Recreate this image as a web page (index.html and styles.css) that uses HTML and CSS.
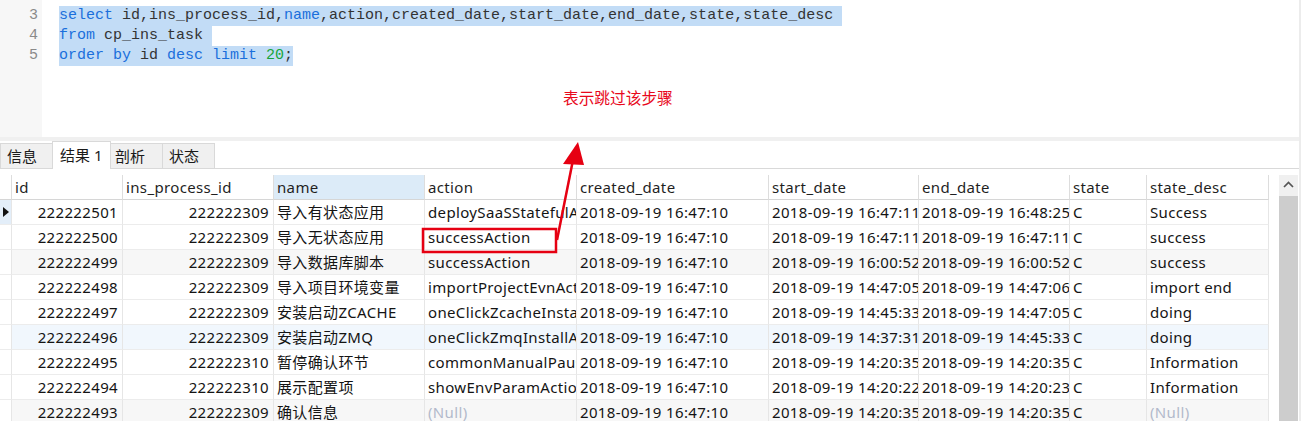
FILE: index.html
```html
<!DOCTYPE html>
<html lang="zh">
<head>
<meta charset="utf-8">
<title>Navicat 查询结果</title>
<link rel="stylesheet" href="styles.css">
</head>
<body>
<div class="page">
  <div class="editor">
    <div class="gutter">
      <div class="ln">3</div>
      <div class="ln">4</div>
      <div class="ln">5</div>
    </div>
    <div class="code">
      <div class="line"><span class="sel"><span class="kw">select</span> id,ins_process_id,<span class="kw">name</span>,action,created_date,start_date,end_date,state,state_desc </span></div>
      <div class="line"><span class="sel"><span class="kw">from</span> cp_ins_task </span></div>
      <div class="line"><span class="sel"><span class="kw">order by</span> id <span class="kw">desc</span> <span class="kw">limit</span> <span class="num">20</span>;</span></div>
    </div>
    <div class="note">表示跳过该步骤</div>
  </div>
  <div class="band"></div>
  <div class="tabs">
    <div class="tab t1">信息</div>
    <div class="tab t2 active">结果 1</div>
    <div class="tab t3">剖析</div>
    <div class="tab t4">状态</div>
  </div>
  <div class="results">
    <div class="grid">
      <div class="row head">
        <div class="cell ind"></div>
        <div class="cell">id</div>
        <div class="cell">ins_process_id</div>
        <div class="cell hsel">name</div>
        <div class="cell">action</div>
        <div class="cell">created_date</div>
        <div class="cell">start_date</div>
        <div class="cell">end_date</div>
        <div class="cell">state</div>
        <div class="cell">state_desc</div>
      </div>
      <div class="row">
        <div class="cell ind cur"><span class="tri"></span></div>
        <div class="cell r">222222501</div>
        <div class="cell r">222222309</div>
        <div class="cell">导入有状态应用</div>
        <div class="cell">deploySaaSStatefulAppAction</div>
        <div class="cell">2018-09-19 16:47:10</div>
        <div class="cell">2018-09-19 16:47:11</div>
        <div class="cell">2018-09-19 16:48:25</div>
        <div class="cell">C</div>
        <div class="cell">Success</div>
      </div>
      <div class="row">
        <div class="cell ind"></div>
        <div class="cell r">222222500</div>
        <div class="cell r">222222309</div>
        <div class="cell">导入无状态应用</div>
        <div class="cell">successAction</div>
        <div class="cell">2018-09-19 16:47:10</div>
        <div class="cell">2018-09-19 16:47:11</div>
        <div class="cell">2018-09-19 16:47:11</div>
        <div class="cell">C</div>
        <div class="cell">success</div>
      </div>
      <div class="row alt">
        <div class="cell ind"></div>
        <div class="cell r">222222499</div>
        <div class="cell r">222222309</div>
        <div class="cell">导入数据库脚本</div>
        <div class="cell">successAction</div>
        <div class="cell">2018-09-19 16:47:10</div>
        <div class="cell">2018-09-19 16:00:52</div>
        <div class="cell">2018-09-19 16:00:52</div>
        <div class="cell">C</div>
        <div class="cell">success</div>
      </div>
      <div class="row">
        <div class="cell ind"></div>
        <div class="cell r">222222498</div>
        <div class="cell r">222222309</div>
        <div class="cell">导入项目环境变量</div>
        <div class="cell">importProjectEvnAction</div>
        <div class="cell">2018-09-19 16:47:10</div>
        <div class="cell">2018-09-19 14:47:05</div>
        <div class="cell">2018-09-19 14:47:06</div>
        <div class="cell">C</div>
        <div class="cell">import end</div>
      </div>
      <div class="row">
        <div class="cell ind"></div>
        <div class="cell r">222222497</div>
        <div class="cell r">222222309</div>
        <div class="cell">安装启动ZCACHE</div>
        <div class="cell">oneClickZcacheInstallAction</div>
        <div class="cell">2018-09-19 16:47:10</div>
        <div class="cell">2018-09-19 14:45:33</div>
        <div class="cell">2018-09-19 14:47:05</div>
        <div class="cell">C</div>
        <div class="cell">doing</div>
      </div>
      <div class="row hover">
        <div class="cell ind"></div>
        <div class="cell r">222222496</div>
        <div class="cell r">222222309</div>
        <div class="cell">安装启动ZMQ</div>
        <div class="cell">oneClickZmqInstallAction</div>
        <div class="cell">2018-09-19 16:47:10</div>
        <div class="cell">2018-09-19 14:37:31</div>
        <div class="cell">2018-09-19 14:45:33</div>
        <div class="cell">C</div>
        <div class="cell">doing</div>
      </div>
      <div class="row">
        <div class="cell ind"></div>
        <div class="cell r">222222495</div>
        <div class="cell r">222222310</div>
        <div class="cell">暂停确认环节</div>
        <div class="cell">commonManualPauseAction</div>
        <div class="cell">2018-09-19 16:47:10</div>
        <div class="cell">2018-09-19 14:20:35</div>
        <div class="cell">2018-09-19 14:20:35</div>
        <div class="cell">C</div>
        <div class="cell">Information</div>
      </div>
      <div class="row">
        <div class="cell ind"></div>
        <div class="cell r">222222494</div>
        <div class="cell r">222222310</div>
        <div class="cell">展示配置项</div>
        <div class="cell">showEnvParamAction</div>
        <div class="cell">2018-09-19 16:47:10</div>
        <div class="cell">2018-09-19 14:20:22</div>
        <div class="cell">2018-09-19 14:20:23</div>
        <div class="cell">C</div>
        <div class="cell">Information</div>
      </div>
      <div class="row alt">
        <div class="cell ind"></div>
        <div class="cell r">222222493</div>
        <div class="cell r">222222309</div>
        <div class="cell">确认信息</div>
        <div class="cell null">(Null)</div>
        <div class="cell">2018-09-19 16:47:10</div>
        <div class="cell">2018-09-19 14:20:35</div>
        <div class="cell">2018-09-19 14:20:35</div>
        <div class="cell">C</div>
        <div class="cell null">(Null)</div>
      </div>
    </div>
    <div class="vscroll">
      <div class="vs-btn">
        <svg width="19" height="21" viewBox="0 0 19 21"><polyline points="5,12 9.5,7.5 14,12" fill="none" stroke="#555" stroke-width="1.7"/></svg>
      </div>
      <div class="vs-thumb"></div>
    </div>
  </div>
  <svg class="callout" width="1301" height="421" viewBox="0 0 1301 421">
    <rect x="423" y="229" width="133" height="23" fill="none" stroke="#e60012" stroke-width="2.5"/>
    <line x1="557" y1="240" x2="573" y2="160" stroke="#e60012" stroke-width="2.5"/>
    <polygon points="578,142 563,164 584,165" fill="#e60012"/>
  </svg>
</div>
</body>
</html>
```
FILE: styles.css
```css
html, body {
  margin: 0;
  padding: 0;
  background: #ffffff;
}

body {
  font-family: "Noto Sans", "Noto Sans CJK SC", sans-serif;
  color: #1a1a1a;
}

.page {
  position: relative;
  width: 1299px;
  height: 421px;
  overflow: hidden;
  border-right: 2px solid #ececec;
}

/* ---------- SQL editor ---------- */
.editor {
  position: relative;
  height: 137px;
  display: flex;
}

.gutter {
  width: 42px;
  box-sizing: border-box;
  background: #f7f7f7;
  padding: 6px 4px 0 0;
  text-align: right;
  font: 15px/20px "Liberation Mono", monospace;
  color: #8a8a8a;
}

.code {
  padding: 5px 0 0 17px;
  font: 15px/20px "Liberation Mono", monospace;
  color: #333333;
}

.line {
  height: 20px;
  padding-top: 1px;
  box-sizing: border-box;
  white-space: pre;
}

.sel {
  background: #c2dcf6;
  padding: 1px 0 2px;
}

.kw {
  color: #1a6fdc;
}

.num {
  color: #17a53a;
}

.note {
  position: absolute;
  left: 563px;
  top: 88px;
  font-size: 15.7px;
  line-height: 21px;
  color: #e8081c;
}

/* ---------- tabs ---------- */
.band {
  height: 4px;
  background: #f0f0f0;
}

.tabs {
  height: 27px;
  display: flex;
  align-items: flex-end;
  border-bottom: 1px solid #d9d9d9;
}

.tab {
  box-sizing: border-box;
  height: 25px;
  padding-left: 6px;
  border: 1px solid #d9d9d9;
  border-bottom: none;
  margin-right: -1px;
  background: #f0f0f0;
  font-size: 15px;
  line-height: 24px;
  color: #1a1a1a;
  white-space: nowrap;
}

.t1 { width: 53px; }
.t2 { width: 59px; padding-left: 7px; }
.t3 { width: 53px; padding-left: 4px; }
.t4 { width: 53px; }

.tab.active {
  position: relative;
  z-index: 1;
  height: 28px;
  margin-bottom: -1px;
  background: #ffffff;
  line-height: 27px;
}

/* ---------- result grid ---------- */
.results {
  display: flex;
  gap: 10px;
  padding-top: 6px;
}

.grid {
  width: 1269px;
  font-size: 15px;
  letter-spacing: 0.35px;
}

.row {
  display: grid;
  grid-template-columns: 12px 111px 151px 151px 152px 192px 150px 151px 77px 122px;
  height: 25px;
}

.cell {
  box-sizing: border-box;
  height: 25px;
  padding: 0 3px;
  border-right: 1px solid #e6e6e6;
  border-bottom: 1px solid #ececec;
  line-height: 24px;
  white-space: nowrap;
  overflow: hidden;
  color: #141414;
}

.cell.r {
  text-align: right;
  padding-right: 4px;
}

.head .cell {
  border-right-color: #dddddd;
  border-bottom-color: #d6d6d6;
  color: #1f1f1f;
}

.head .hsel {
  background: #dcebf8;
}

.cell.ind {
  padding: 0;
  position: relative;
}

.cell.cur {
  background: #e3eef9;
}

.tri {
  position: absolute;
  left: 3px;
  top: 7px;
  width: 0;
  height: 0;
  border-top: 5px solid transparent;
  border-bottom: 5px solid transparent;
  border-left: 6px solid #111111;
}

.row.alt .cell {
  background: #f7f7f7;
}

.row.hover .cell {
  background: #f1f7fd;
}

.row.alt .cell.ind,
.row.hover .cell.ind {
  background: #ffffff;
}

.cell.null {
  color: #b2bacb;
}

/* ---------- scrollbar ---------- */
.vscroll {
  width: 19px;
  height: 246px;
  display: flex;
  flex-direction: column;
}

.vs-btn {
  height: 21px;
  background: #f0f0f0;
}

.vs-btn svg {
  display: block;
}

.vs-thumb {
  flex: 1;
  background: #cdcdcd;
}

/* ---------- annotation overlay ---------- */
.callout {
  position: absolute;
  left: 0;
  top: 0;
  pointer-events: none;
}
```
